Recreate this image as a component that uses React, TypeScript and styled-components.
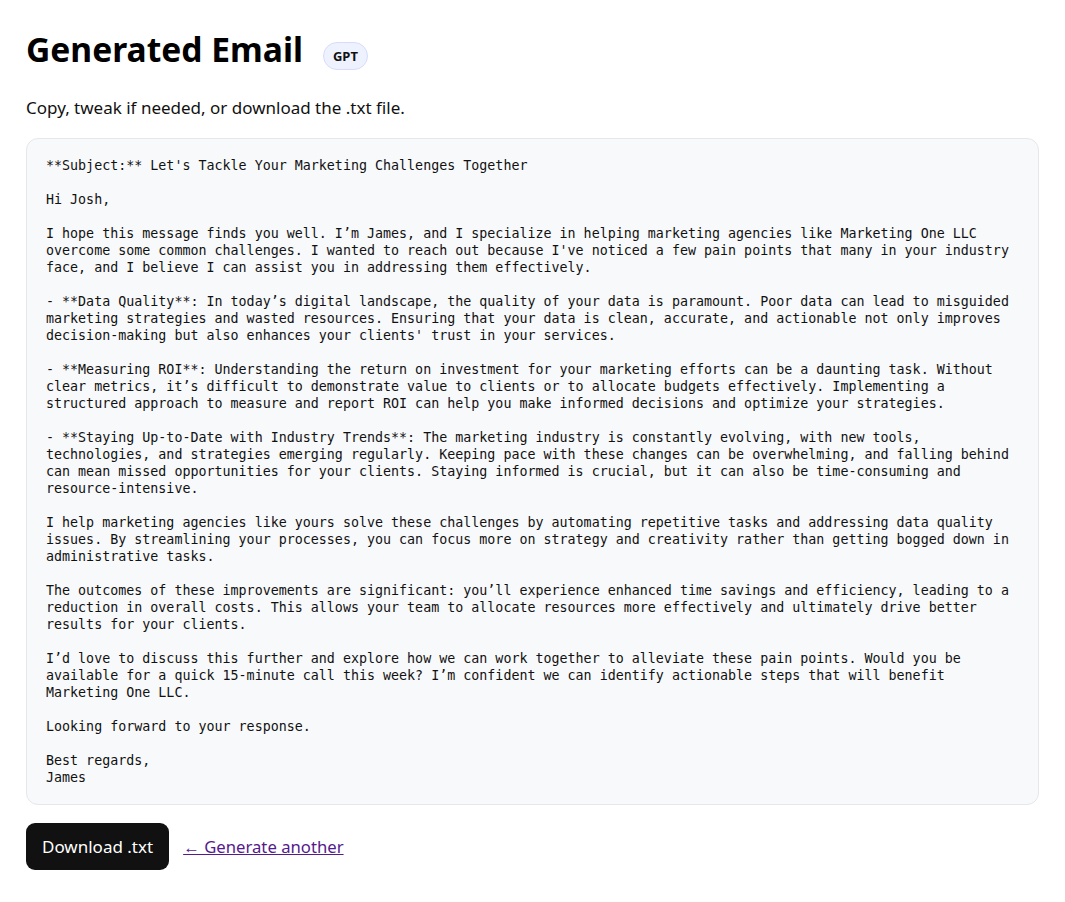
import React from "react";
import styled, { createGlobalStyle } from "styled-components";

const Global = createGlobalStyle`
  html, body { margin: 0; padding: 0; background: #ffffff; }
  body { font-family: "Noto Sans", "Open Sans", sans-serif; color: #111111; }
`;

const Page = styled.main`
  padding: 26px 26px 32px 26px;
  display: flex;
  flex-direction: column;
`;

const TitleRow = styled.div`
  display: flex;
  align-items: center;
  gap: 20px;
  margin-top: 3px;
`;

const Title = styled.h1`
  margin: 0;
  font-size: 33.6px;
  font-weight: 700;
  line-height: 41px;
  color: #000;
`;

const Badge = styled.span`
  display: inline-flex;
  align-items: center;
  justify-content: center;
  box-sizing: border-box;
  height: 28px;
  padding: 0 9px;
  border-radius: 999px;
  background: #eef1fe;
  border: 1px solid #d6dcfb;
  font-size: 13px;
  font-weight: 700;
  color: #111;
  margin-top: 12px;
`;

const Subtitle = styled.p`
  margin: 26px 0 18px 0;
  font-size: 17px;
  line-height: 1.4;
  color: #111;
`;

const EmailBox = styled.pre`
  margin: 0;
  padding: 18px 18px 18px 19px;
  background: #f8f9fb;
  border: 1px solid #e5e7eb;
  border-radius: 12px;
  font-family: "DejaVu Sans Mono", "Liberation Mono", monospace;
  font-size: 13.33px;
  line-height: 17px;
  color: #111;
  white-space: pre;
  overflow: hidden;
`;

const Actions = styled.div`
  display: flex;
  align-items: center;
  gap: 14px;
  margin-top: 18px;
`;

const DownloadButton = styled.button`
  height: 47px;
  padding: 0 16px;
  border: none;
  border-radius: 9px;
  background: #111111;
  color: #ffffff;
  font-family: "Noto Sans", "Open Sans", sans-serif;
  font-size: 17px;
  cursor: pointer;
`;

const BackLink = styled.a`
  font-size: 16.7px;
  color: #551a8b;
  text-decoration: underline;
`;

const email = `**Subject:** Let's Tackle Your Marketing Challenges Together

Hi Josh,

I hope this message finds you well. I’m James, and I specialize in helping marketing agencies like Marketing One LLC
overcome some common challenges. I wanted to reach out because I've noticed a few pain points that many in your industry
face, and I believe I can assist you in addressing them effectively.

- **Data Quality**: In today’s digital landscape, the quality of your data is paramount. Poor data can lead to misguided
marketing strategies and wasted resources. Ensuring that your data is clean, accurate, and actionable not only improves
decision-making but also enhances your clients' trust in your services.

- **Measuring ROI**: Understanding the return on investment for your marketing efforts can be a daunting task. Without
clear metrics, it’s difficult to demonstrate value to clients or to allocate budgets effectively. Implementing a
structured approach to measure and report ROI can help you make informed decisions and optimize your strategies.

- **Staying Up-to-Date with Industry Trends**: The marketing industry is constantly evolving, with new tools,
technologies, and strategies emerging regularly. Keeping pace with these changes can be overwhelming, and falling behind
can mean missed opportunities for your clients. Staying informed is crucial, but it can also be time-consuming and
resource-intensive.

I help marketing agencies like yours solve these challenges by automating repetitive tasks and addressing data quality
issues. By streamlining your processes, you can focus more on strategy and creativity rather than getting bogged down in
administrative tasks.

The outcomes of these improvements are significant: you’ll experience enhanced time savings and efficiency, leading to a
reduction in overall costs. This allows your team to allocate resources more effectively and ultimately drive better
results for your clients.

I’d love to discuss this further and explore how we can work together to alleviate these pain points. Would you be
available for a quick 15-minute call this week? I’m confident we can identify actionable steps that will benefit
Marketing One LLC.

Looking forward to your response.

Best regards,
James`;

export default function App() {
  return (
    <>
      <Global />
      <Page>
        <TitleRow>
          <Title>Generated Email</Title>
          <Badge>GPT</Badge>
        </TitleRow>
        <Subtitle>Copy, tweak if needed, or download the .txt file.</Subtitle>
        <EmailBox>{email}</EmailBox>
        <Actions>
          <DownloadButton>Download .txt</DownloadButton>
          <BackLink href="#">← Generate another</BackLink>
        </Actions>
      </Page>
    </>
  );
}
